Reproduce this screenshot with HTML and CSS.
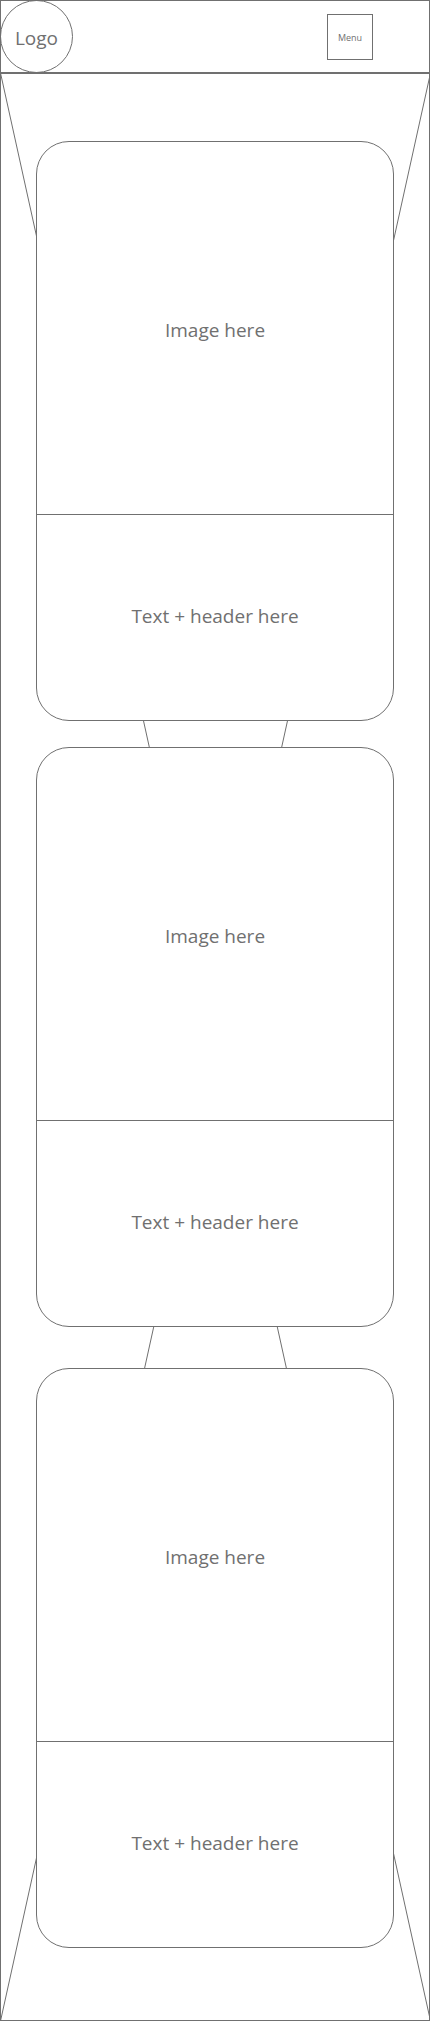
FILE: index.html
```html
<!DOCTYPE html>
<html lang="en">
<head>
  <meta charset="utf-8">
  <meta name="viewport" content="width=device-width, initial-scale=1">
  <title>Wireframe</title>
  <link rel="stylesheet" href="styles.css">
</head>
<body>
  <header class="site-header">
    <a class="logo" href="#">Logo</a>
    <button class="menu-button" type="button">Menu</button>
  </header>
  <main class="content">
    <svg class="content-cross" viewBox="0 0 860 1948" preserveAspectRatio="none" aria-hidden="true">
      <path d="M1 0L861 1948M861 0L1 1948" />
    </svg>
    <article class="card">
      <div class="card-image">Image here</div>
      <div class="card-text">Text + header here</div>
    </article>
    <article class="card">
      <div class="card-image">Image here</div>
      <div class="card-text">Text + header here</div>
    </article>
    <article class="card card-last">
      <div class="card-image">Image here</div>
      <div class="card-text">Text + header here</div>
    </article>
  </main>
</body>
</html>
```

FILE: styles.css
```css
* {
  box-sizing: border-box;
}

body {
  margin: 0;
  background: #fff;
  color: #707070;
  font-family: "Open Sans", "Noto Sans", sans-serif;
  font-size: 19px;
  line-height: 28px;
}

.site-header {
  display: flex;
  align-items: center;
  justify-content: space-between;
  height: 73px;
  padding-right: 56px;
  border: 1px solid #707070;
}

.logo {
  display: flex;
  align-items: center;
  justify-content: center;
  width: 73px;
  height: 73px;
  margin: -1px;
  padding-top: 2px;
  border: 1px solid #707070;
  border-radius: 50%;
  color: inherit;
  text-decoration: none;
}

.menu-button {
  width: 46px;
  height: 46px;
  padding: 2px 0 0;
  border: 1px solid #707070;
  border-radius: 0;
  background: #fff;
  color: inherit;
  font-family: inherit;
  font-size: 9px;
  line-height: 12px;
}

.content {
  position: relative;
  display: flex;
  flex-direction: column;
  gap: 26px;
  padding: 67px 35px 72px;
  border: 1px solid #707070;
}

.content-cross {
  position: absolute;
  inset: -1px;
  width: calc(100% + 2px);
  height: calc(100% + 2px);
  fill: none;
  stroke: #707070;
  stroke-width: 1px;
}

.content-cross path {
  vector-effect: non-scaling-stroke;
}

.card {
  position: relative;
  border: 1px solid #707070;
  border-radius: 33px;
  background: #fff;
}

.card-last {
  margin-top: 15px;
}

.card-image,
.card-text {
  display: flex;
  align-items: center;
  justify-content: center;
}

.card-image {
  height: 373px;
  padding-top: 4px;
  border-bottom: 1px solid #707070;
}

.card-text {
  height: 205px;
  padding-bottom: 4px;
}
```
